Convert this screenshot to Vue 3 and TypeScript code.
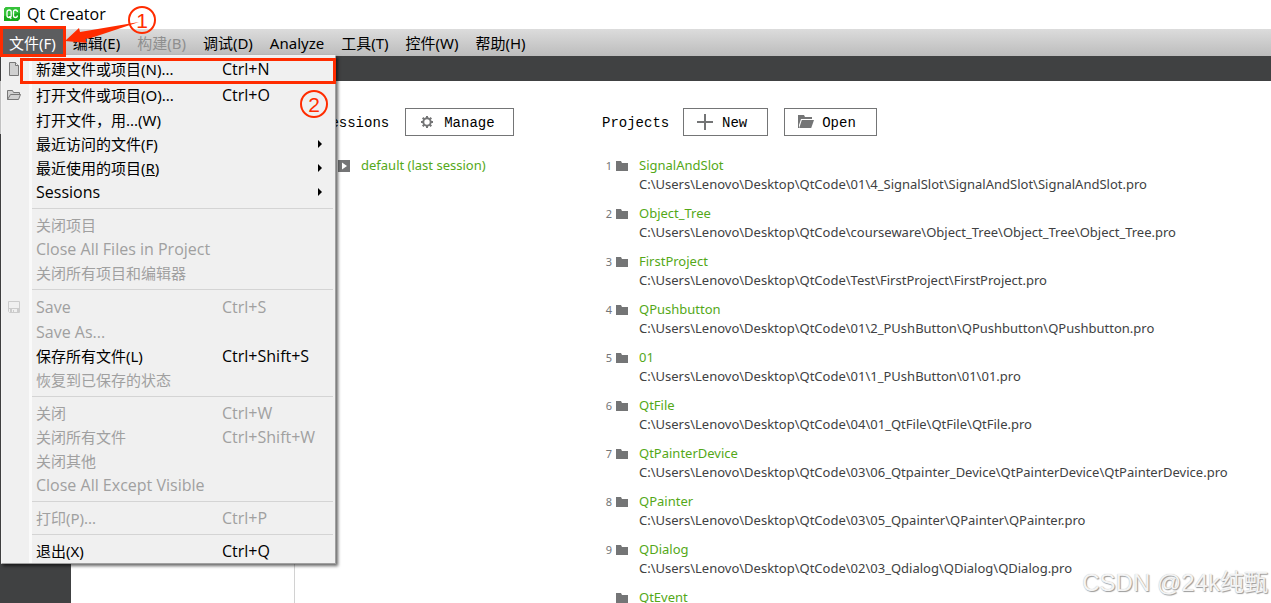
<script setup lang="ts">
interface MenuEntry {
  label: string
  mnemonic?: string
  tail?: string
  shortcut?: string
  disabled?: boolean
  submenu?: boolean
  icon?: 'file' | 'folder' | 'save'
}

interface Project {
  name: string
  path: string
}

const menus: { label: string; disabled?: boolean }[] = [
  { label: '文件(F)' },
  { label: '编辑(E)' },
  { label: '构建(B)', disabled: true },
  { label: '调试(D)' },
  { label: 'Analyze' },
  { label: '工具(T)' },
  { label: '控件(W)' },
  { label: '帮助(H)' },
]

const groups: MenuEntry[][] = [
  [
    { label: '新建文件或项目(N)...', shortcut: 'Ctrl+N', icon: 'file' },
    { label: '打开文件或项目(O)...', shortcut: 'Ctrl+O', icon: 'folder' },
    { label: '打开文件，用...(W)' },
    { label: '最近访问的文件(F)', submenu: true },
    { label: '最近使用的项目(', mnemonic: 'R', tail: ')', submenu: true },
    { label: 'Sessions', submenu: true },
  ],
  [
    { label: '关闭项目', disabled: true },
    { label: 'Close All Files in Project', disabled: true },
    { label: '关闭所有项目和编辑器', disabled: true },
  ],
  [
    { label: 'Save', shortcut: 'Ctrl+S', icon: 'save', disabled: true },
    { label: 'Save As...', disabled: true },
    { label: '保存所有文件(L)', shortcut: 'Ctrl+Shift+S' },
    { label: '恢复到已保存的状态', disabled: true },
  ],
  [
    { label: '关闭', shortcut: 'Ctrl+W', disabled: true },
    { label: '关闭所有文件', shortcut: 'Ctrl+Shift+W', disabled: true },
    { label: '关闭其他', disabled: true },
    { label: 'Close All Except Visible', disabled: true },
  ],
  [{ label: '打印(P)...', shortcut: 'Ctrl+P', disabled: true }],
  [{ label: '退出(X)', shortcut: 'Ctrl+Q' }],
]

const isLatin = (text: string): boolean => /^[ -~]*$/.test(text)

const root = 'C:\\Users\\Lenovo\\Desktop\\QtCode\\'
const projects: Project[] = [
  { name: 'SignalAndSlot', path: root + '01\\4_SignalSlot\\SignalAndSlot\\SignalAndSlot.pro' },
  { name: 'Object_Tree', path: root + 'courseware\\Object_Tree\\Object_Tree\\Object_Tree.pro' },
  { name: 'FirstProject', path: root + 'Test\\FirstProject\\FirstProject.pro' },
  { name: 'QPushbutton', path: root + '01\\2_PUshButton\\QPushbutton\\QPushbutton.pro' },
  { name: '01', path: root + '01\\1_PUshButton\\01\\01.pro' },
  { name: 'QtFile', path: root + '04\\01_QtFile\\QtFile\\QtFile.pro' },
  { name: 'QtPainterDevice', path: root + '03\\06_Qtpainter_Device\\QtPainterDevice\\QtPainterDevice.pro' },
  { name: 'QPainter', path: root + '03\\05_Qpainter\\QPainter\\QPainter.pro' },
  { name: 'QDialog', path: root + '02\\03_Qdialog\\QDialog\\QDialog.pro' },
  { name: 'QtEvent', path: '' },
]
</script>

<template>
  <div class="window">
    <header class="titlebar">
      <svg class="logo" width="16" height="14" viewBox="0 0 16 14" aria-hidden="true">
        <path d="M2 0H16V12L14 14H0V2Z" fill="#17a81a" />
        <path d="M2 0H16V6L0 9V2Z" fill="#35c23a" />
        <path d="M7.2 5Q7.2 3 5.200 3T3 5V8.500Q3 10.500 5.200 10.500T7.200 8.500ZM5.500 9L7.200 11.800M13.400 5Q13.400 3 11.400 3T9.500 5V8.500Q9.500 10.500 11.400 10.500T13.400 8.500" fill="none" stroke="#fff" stroke-width="1.300" />
      </svg>
      <span>Qt Creator</span>
    </header>

    <nav class="menubar" aria-label="Menu bar">
      <button v-for="(m, i) in menus" :key="m.label" type="button" :disabled="m.disabled" :class="{ active: i === 0 }">{{ m.label }}</button>
    </nav>

    <div class="toolstrip"></div>

    <div class="body">
      <aside class="modes"></aside>
      <aside class="side"></aside>
      <main class="content">
        <section class="sessions">
          <div class="head">
            <h2>Sessions</h2>
            <button type="button" class="action">
              <svg width="14" height="14" viewBox="0 0 14 14" aria-hidden="true">
                <circle cx="7" cy="7" r="3.7" fill="none" stroke="#747576" stroke-width="2" />
                <path d="M7 1V3M7 11V13M1 7H3M11 7H13M2.700 2.700L4.200 4.200M9.800 9.800L11.300 11.300M2.700 11.300L4.200 9.800M9.800 4.200L11.300 2.700" stroke="#747576" stroke-width="2" />
              </svg>
              <span>Manage</span>
            </button>
          </div>
          <a href="#" class="session">
            <svg width="12" height="12" viewBox="0 0 12 12" aria-hidden="true">
              <rect width="12" height="12" fill="#747576" />
              <path d="M4 2.5L9 6L4 9.5Z" fill="#fff" />
            </svg>
            <span>default (last session)</span>
          </a>
        </section>

        <section class="projects">
          <div class="head">
            <h2>Projects</h2>
            <button type="button" class="action new">
              <svg width="16" height="16" viewBox="0 0 16 16" aria-hidden="true">
                <path d="M8 0V16M0 8H16" stroke="#747576" stroke-width="2" />
              </svg>
              <span>New</span>
            </button>
            <button type="button" class="action open">
              <svg width="16" height="14" viewBox="0 0 16 14" aria-hidden="true">
                <path d="M0 0H6L7 2H14V4H3L1 10V13H0Z" fill="#747576" />
                <path d="M3.800 5H16L13.200 13H1.200Z" fill="#747576" />
              </svg>
              <span>Open</span>
            </button>
          </div>
          <ol class="list">
            <li v-for="(p, i) in projects" :key="p.name">
              <span class="num">{{ i < 9 ? i + 1 : '' }}</span>
              <svg class="folder" width="12" height="10" viewBox="0 0 12 10" aria-hidden="true">
                <path d="M0 0H5L6 2H12V10H0Z" fill="#747576" />
              </svg>
              <div class="info">
                <a href="#">{{ p.name }}</a>
                <p>{{ p.path }}</p>
              </div>
            </li>
          </ol>
        </section>
      </main>
    </div>

    <div class="dropdown" role="menu">
      <div v-for="(g, gi) in groups" :key="gi" class="group" role="group">
        <button v-for="e in g" :key="e.label" type="button" role="menuitem" class="entry" :class="{ tall: e.icon }" :disabled="e.disabled">
          <span class="glyph">
            <svg v-if="e.icon === 'file'" width="12" height="14" viewBox="0 0 12 14" aria-hidden="true">
              <path d="M1.5 .5H7.5L10.5 3.5V13.5H1.5Z" fill="#d0d0d0" stroke="#777" />
              <path d="M7.5 .5V3.5H10.5" fill="#efefef" stroke="#777" />
            </svg>
            <svg v-else-if="e.icon === 'folder'" width="14" height="12" viewBox="0 0 14 12" aria-hidden="true">
              <path d="M.5 10.5V1.5H5.5L6.5 3.5H12.5V5.5" fill="#d0d0d0" stroke="#777" />
              <path d="M.5 10.5L3.5 5.5H13.5L11.5 10.5Z" fill="#d0d0d0" stroke="#777" />
            </svg>
            <svg v-else-if="e.icon === 'save'" width="12" height="12" viewBox="0 0 12 12" aria-hidden="true">
              <path d="M.5 .5H11.5V11.5H1.5L.5 10.5Z" fill="none" stroke="#ccc" />
              <path d="M1 7H11V8H1ZM2 8H4V12H2ZM9 8H11V12H9ZM5 9H6V12H5Z" fill="#ccc" />
            </svg>
          </span>
          <span class="label" :class="{ latin: isLatin(e.label) }">{{ e.label }}<u v-if="e.mnemonic">{{ e.mnemonic }}</u>{{ e.tail }}</span>
          <span class="latin">{{ e.shortcut }}</span>
          <svg v-if="e.submenu" class="arrow" width="4" height="8" viewBox="0 0 4 8" aria-hidden="true">
            <path d="M0 0L4 4L0 8Z" fill="#000" />
          </svg>
        </button>
      </div>
    </div>

    <div class="mark mark-menu"></div>
    <div class="mark mark-entry"></div>
    <svg class="pointer" width="80" height="28" viewBox="0 0 80 28" aria-hidden="true">
      <path d="M0 19L14 6L15 10L74 0L26 16L20 17L22 21Z" fill="#ff2c00" />
    </svg>
    <span class="step step-one">1</span>
    <span class="step step-two">2</span>
    <span class="watermark">CSDN @24k纯甄</span>
  </div>
</template>

<style>
body {
  margin: 0;
}
</style>

<style scoped>
.window {
  position: relative;
  display: flex;
  flex-direction: column;
  height: 100vh;
  overflow: hidden;
  background: #fff;
  color: #000;
  font: 15px/24px "Noto Sans", "Noto Sans CJK SC", sans-serif;
}

button {
  margin: 0;
  padding: 0;
  border: 0;
  background: none;
  color: inherit;
  font: inherit;
}

.titlebar {
  display: flex;
  box-sizing: border-box;
  flex: none;
  align-items: center;
  gap: 7px;
  height: 29px;
  padding: 0 0 2px 4px;
  font-family: "Open Sans", sans-serif;
  font-size: 16px;
}

.menubar {
  display: flex;
  flex: none;
  gap: 1px;
  height: 27px;
  padding-left: 1px;
  background: linear-gradient(#dcdcdc, #bcbcbc);
}

.menubar button {
  padding: 0 8px;
  white-space: nowrap;
}

.menubar button:disabled {
  color: #8f8f8f;
}

.menubar .active {
  background: #5c5d5f;
  color: #fff;
}

.toolstrip {
  flex: none;
  height: 25px;
  background: #404142;
}

.body {
  display: flex;
  flex: 1;
  min-height: 0;
}

.modes {
  flex: none;
  width: 71px;
  background: linear-gradient(#c8c8c8 53px, #404142 53px);
}

.side {
  flex: none;
  width: 223px;
  border-right: 1px solid #d2d2d2;
}

.content {
  display: flex;
  flex: 1;
  min-width: 0;
  padding: 27px 0 0 27px;
}

.sessions {
  flex: none;
  width: 280px;
}

.projects {
  flex: 1;
  min-width: 0;
}

.head {
  display: flex;
  align-items: center;
  height: 28px;
  gap: 16px;
  font: 14px/20px "Liberation Mono", monospace;
}

.head h2,
.action span {
  margin: 0;
  padding-top: 2px;
  font: inherit;
}

.projects h2 {
  width: 65px;
}

.action {
  display: flex;
  box-sizing: border-box;
  align-items: center;
  gap: 10px;
  height: 28px;
  padding: 0 18px 0 14px;
  border: 1px solid #747576;
}

.new {
  gap: 9px;
  padding: 0 20px 0 13px;
}

.open {
  gap: 8px;
  padding: 0 20px 0 13px;
}

.session {
  display: flex;
  align-items: center;
  gap: 11px;
  margin: 20px 0 0 16px;
  color: #54a818;
  font-size: 13px;
  line-height: 19px;
  text-decoration: none;
}

.list {
  margin: 20px 0 0;
  padding: 0;
  list-style: none;
}

.list li {
  display: flex;
  height: 48px;
  font-size: 13px;
  line-height: 19px;
}

.num {
  width: 10px;
  padding-right: 4px;
  color: #747576;
  font-size: 11px;
  text-align: right;
}

.folder {
  flex: none;
  margin: 5px 11px 0 0;
}

.info a {
  color: #54a818;
  text-decoration: none;
}

.info p {
  margin: 0;
  color: #404142;
  white-space: nowrap;
}

.dropdown {
  position: absolute;
  top: 55px;
  left: 1px;
  box-sizing: border-box;
  width: 335px;
  border: 1px solid #f4f4f4;
  border-right-color: #a0a0a0;
  border-bottom-color: #a0a0a0;
  background: linear-gradient(90deg, #f0f0f0 27px, #fafafa 27px, #fafafa 30px, #f0f0f0 30px);
  box-shadow: 2px 2px 3px rgba(0, 0, 0, 0.6);
}

.group + .group {
  padding-top: 9px;
  background: linear-gradient(#d4d4d4, #d4d4d4) 30px 4px / 301px 1px no-repeat;
}

.entry {
  display: flex;
  align-items: center;
  width: 100%;
  height: 24px;
  text-align: left;
  white-space: nowrap;
}

.entry.tall {
  height: 26px;
}

.entry:disabled {
  color: #a0a0a0;
}

.glyph {
  display: flex;
  justify-content: center;
  width: 24px;
  margin-right: 10px;
}

.label {
  width: 186px;
}

.latin {
  font-family: "Open Sans", sans-serif;
  font-size: 16px;
}

.arrow {
  margin-left: auto;
  margin-right: 13px;
}

.mark {
  position: absolute;
  box-sizing: border-box;
  border: 3px solid #ff2c00;
}

.mark-menu {
  top: 26px;
  left: 0;
  width: 66px;
  height: 31px;
}

.mark-entry {
  top: 58px;
  left: 20px;
  width: 316px;
  height: 26px;
}

.pointer {
  position: absolute;
  top: 22px;
  left: 65px;
}

.step {
  position: absolute;
  box-sizing: border-box;
  width: 28px;
  height: 28px;
  border: 2px solid #ff2c00;
  border-radius: 50%;
  color: #ff2c00;
  font: 21px/26px "Liberation Sans", sans-serif;
  text-align: center;
}

.step-one {
  top: 6px;
  left: 128px;
}

.step-two {
  top: 90px;
  left: 300px;
}

.watermark {
  position: absolute;
  right: 3px;
  bottom: 4px;
  color: #f4f4f4;
  font: 24px/32px "Liberation Sans", "Noto Sans CJK SC", sans-serif;
  text-shadow: 1px 1px 1px #999, 0 0 1px #bbb;
}
</style>
